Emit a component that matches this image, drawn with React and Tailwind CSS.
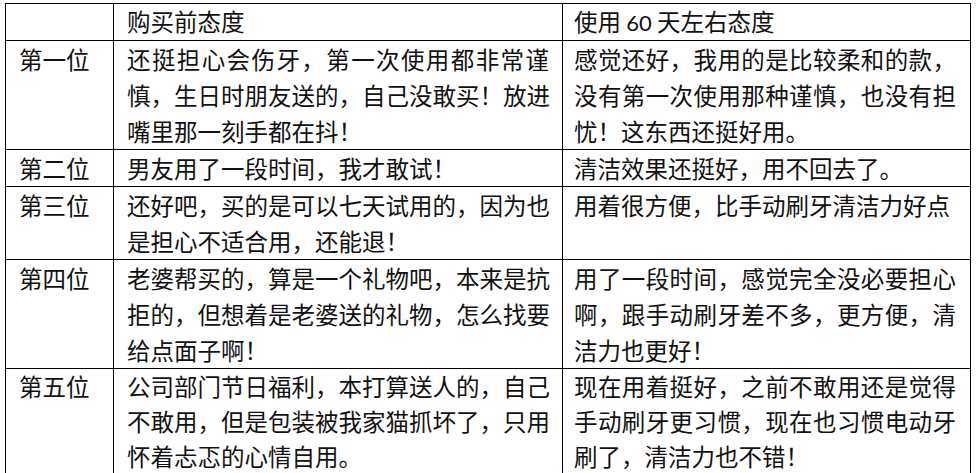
import React from "react";

const rows = [
  {
    rank: "第一位",
    before: ["还挺担心会伤牙，第一次使用都非常谨", "慎，生日时朋友送的，自己没敢买！放进", "嘴里那一刻手都在抖！"],
    after: ["感觉还好，我用的是比较柔和的款，", "没有第一次使用那种谨慎，也没有担", "忧！这东西还挺好用。"],
  },
  {
    rank: "第二位",
    before: ["男友用了一段时间，我才敢试！"],
    after: ["清洁效果还挺好，用不回去了。"],
  },
  {
    rank: "第三位",
    before: ["还好吧，买的是可以七天试用的，因为也", "是担心不适合用，还能退！"],
    after: ["用着很方便，比手动刷牙清洁力好点"],
  },
  {
    rank: "第四位",
    before: ["老婆帮买的，算是一个礼物吧，本来是抗", "拒的，但想着是老婆送的礼物，怎么找要", "给点面子啊！"],
    after: ["用了一段时间，感觉完全没必要担心", "啊，跟手动刷牙差不多，更方便，清", "洁力也更好！"],
  },
  {
    rank: "第五位",
    before: ["公司部门节日福利，本打算送人的，自己", "不敢用，但是包装被我家猫抓坏了，只用", "怀着忐忑的心情自用。"],
    after: ["现在用着挺好，之前不敢用还是觉得", "手动刷牙更习惯，现在也习惯电动牙", "刷了，清洁力也不错！"],
    last: true,
  },
];

function Lines({ lines }) {
  return (
    <>
      {lines.map((l, i) => {
        const justify = i < lines.length - 1;
        return justify ? (
          <div key={i} className="whitespace-nowrap text-justify [text-align-last:justify]">
            {l}
          </div>
        ) : (
          <div key={i} className="whitespace-nowrap">
            {l}
          </div>
        );
      })}
    </>
  );
}

export default function App() {
  return (
    <div className="w-[977px] h-[473px] bg-white pl-[5px] pt-[3px] text-[#111] font-['Noto_Sans_CJK_SC',sans-serif] text-[23.5px]">
      <table className="border-collapse table-fixed w-[965px]">
        <colgroup>
          <col className="w-[108px]" />
          <col className="w-[449px]" />
          <col className="w-[408px]" />
        </colgroup>
        <tbody>
          <tr className="h-[35px]">
            <td className="border border-black p-0"></td>
            <td className="border border-black pl-[13px] pr-[13px] py-0 leading-[34px] align-top">购买前态度</td>
            <td className="border border-black pl-[11px] pr-[14px] py-0 leading-[34px] align-top">
              使用 <span className="font-['Lato',sans-serif] text-[22px]">60</span> 天左右态度
            </td>
          </tr>
          {rows.map((r, i) => (
            <tr key={i}>
              <td className={"border border-black pl-[13px] py-0 align-top " + (r.last ? "leading-[35px]" : "leading-[36px]")}>
                {r.rank}
              </td>
              <td className={"border border-black pl-[13px] pr-[13px] py-0 align-top " + (r.last ? "leading-[35px]" : "leading-[36px]")}>
                <Lines lines={r.before} />
              </td>
              <td className={"border border-black pl-[11px] pr-[14px] py-0 align-top " + (r.last ? "leading-[35px]" : "leading-[36px]")}>
                <Lines lines={r.after} />
              </td>
            </tr>
          ))}
        </tbody>
      </table>
    </div>
  );
}
